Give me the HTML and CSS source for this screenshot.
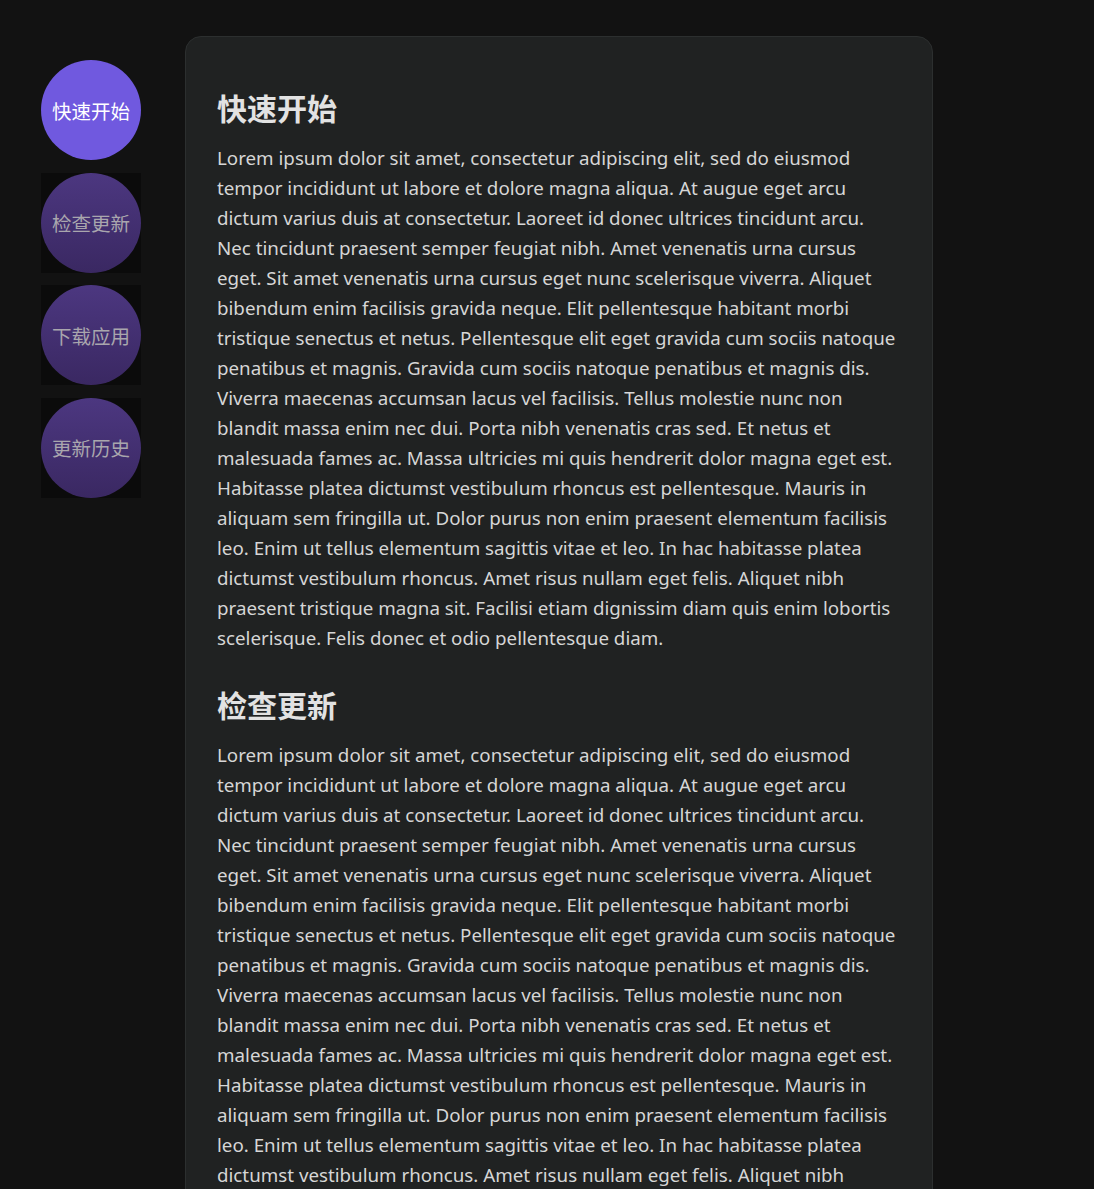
FILE: index.html
```html
<!DOCTYPE html>
<html lang="zh">
<head>
<meta charset="utf-8">
<title>Docs</title>
<link rel="stylesheet" href="styles.css">
</head>
<body>
<div class="layout">
  <nav class="side">
    <a class="nav-btn active" href="#start"><span class="circle">快速开始</span></a>
    <a class="nav-btn" href="#update"><span class="circle">检查更新</span></a>
    <a class="nav-btn" href="#download"><span class="circle">下载应用</span></a>
    <a class="nav-btn" href="#history"><span class="circle">更新历史</span></a>
  </nav>
  <main class="card">
    <section id="start">
      <h2>快速开始</h2>
      <p>Lorem ipsum dolor sit amet, consectetur adipiscing elit, sed do eiusmod tempor incididunt ut labore et dolore magna aliqua. At augue eget arcu dictum varius duis at consectetur. Laoreet id donec ultrices tincidunt arcu. Nec tincidunt praesent semper feugiat nibh. Amet venenatis urna cursus eget. Sit amet venenatis urna cursus eget nunc scelerisque viverra. Aliquet bibendum enim facilisis gravida neque. Elit pellentesque habitant morbi tristique senectus et netus. Pellentesque elit eget gravida cum sociis natoque penatibus et magnis. Gravida cum sociis natoque penatibus et magnis dis. Viverra maecenas accumsan lacus vel facilisis. Tellus molestie nunc non blandit massa enim nec dui. Porta nibh venenatis cras sed. Et netus et malesuada fames ac. Massa ultricies mi quis hendrerit dolor magna eget est. Habitasse platea dictumst vestibulum rhoncus est pellentesque. Mauris in aliquam sem fringilla ut. Dolor purus non enim praesent elementum facilisis leo. Enim ut tellus elementum sagittis vitae et leo. In hac habitasse platea dictumst vestibulum rhoncus. Amet risus nullam eget felis. Aliquet nibh praesent tristique magna sit. Facilisi etiam dignissim diam quis enim lobortis scelerisque. Felis donec et odio pellentesque diam.</p>
    </section>
    <section id="update">
      <h2>检查更新</h2>
      <p>Lorem ipsum dolor sit amet, consectetur adipiscing elit, sed do eiusmod tempor incididunt ut labore et dolore magna aliqua. At augue eget arcu dictum varius duis at consectetur. Laoreet id donec ultrices tincidunt arcu. Nec tincidunt praesent semper feugiat nibh. Amet venenatis urna cursus eget. Sit amet venenatis urna cursus eget nunc scelerisque viverra. Aliquet bibendum enim facilisis gravida neque. Elit pellentesque habitant morbi tristique senectus et netus. Pellentesque elit eget gravida cum sociis natoque penatibus et magnis. Gravida cum sociis natoque penatibus et magnis dis. Viverra maecenas accumsan lacus vel facilisis. Tellus molestie nunc non blandit massa enim nec dui. Porta nibh venenatis cras sed. Et netus et malesuada fames ac. Massa ultricies mi quis hendrerit dolor magna eget est. Habitasse platea dictumst vestibulum rhoncus est pellentesque. Mauris in aliquam sem fringilla ut. Dolor purus non enim praesent elementum facilisis leo. Enim ut tellus elementum sagittis vitae et leo. In hac habitasse platea dictumst vestibulum rhoncus. Amet risus nullam eget felis. Aliquet nibh praesent tristique magna sit. Facilisi etiam dignissim diam quis enim lobortis scelerisque. Felis donec et odio pellentesque diam.</p>
    </section>
    <section id="download">
      <h2>下载应用</h2>
      <p>Lorem ipsum dolor sit amet, consectetur adipiscing elit, sed do eiusmod tempor incididunt ut labore et dolore magna aliqua.</p>
    </section>
    <section id="history">
      <h2>更新历史</h2>
      <p>Lorem ipsum dolor sit amet, consectetur adipiscing elit, sed do eiusmod tempor incididunt ut labore et dolore magna aliqua.</p>
    </section>
  </main>
</div>
</body>
</html>
```
FILE: styles.css
```css
html, body {
  margin: 0;
  padding: 0;
  background: #121212;
}
body {
  font-family: "Noto Sans", "Noto Sans CJK SC", sans-serif;
  color: #d6d6d6;
}
.layout {
  display: flex;
  align-items: flex-start;
  padding: 36px 0 0 41px;
  gap: 44px;
}
.side {
  display: flex;
  flex-direction: column;
  gap: 12.5px;
  padding-top: 24px;
  width: 100px;
  flex: none;
}
.nav-btn {
  display: block;
  width: 100px;
  height: 100px;
  background: #0b0b0b;
  text-decoration: none;
}
.nav-btn.active {
  background: transparent;
}
.circle {
  display: flex;
  width: 100px;
  height: 100px;
  border-radius: 50%;
  align-items: center;
  justify-content: center;
  font-family: "Noto Sans CJK SC", sans-serif;
  font-size: 19.5px;
  color: #a9a6ad;
  background: linear-gradient(180deg, #4c3780 0%, #3a2862 100%);
}
.nav-btn.active .circle {
  background: #7059df;
  color: #ffffff;
}
.card {
  width: 748px;
  box-sizing: border-box;
  background: #202222;
  border: 1px solid #2c2f2f;
  border-radius: 16px;
  padding: 32px 31px;
  flex: none;
}
.card h2 {
  font-family: "Noto Sans CJK SC", sans-serif;
  font-size: 30px;
  line-height: 40px;
  font-weight: 700;
  color: #e2e2e2;
  margin: 18px 0 16px;
}
.card p {
  font-size: 18.75px;
  line-height: 30px;
  margin: 0 0 31px;
}
```
